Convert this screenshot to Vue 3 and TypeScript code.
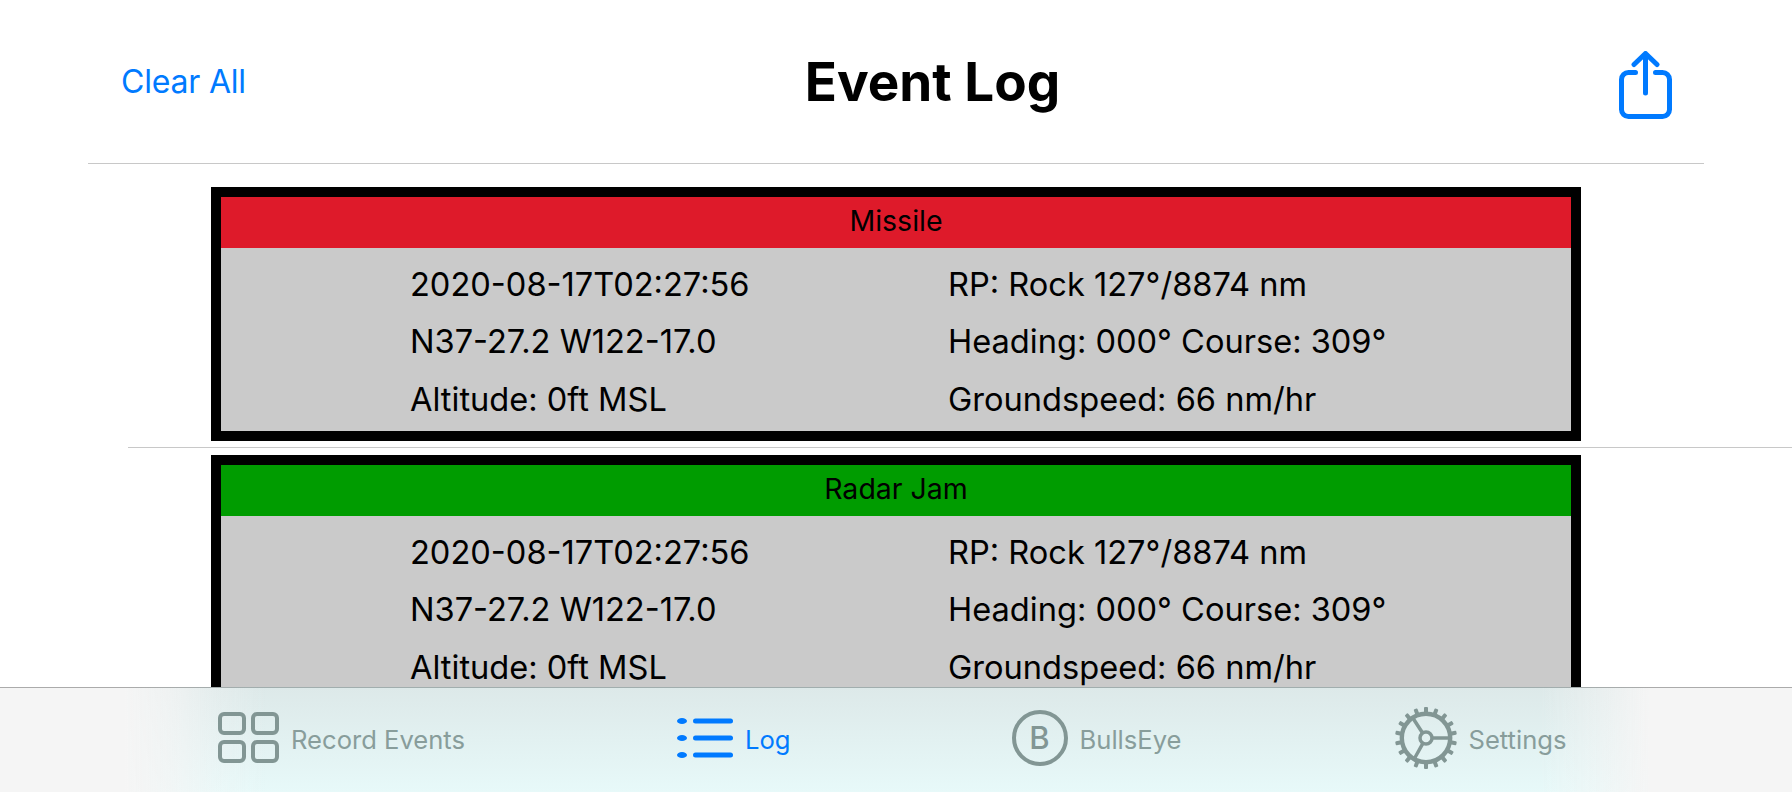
<template>
  <div class="page">
    <header class="nav">
      <span class="clear">Clear All</span>
      <h1 class="title">Event Log</h1>
      <svg class="share" width="53" height="68" viewBox="0 0 53 68" fill="none" stroke="#007aff" stroke-width="5" stroke-linecap="round" stroke-linejoin="round">
        <path d="M16.5 21.5H9.5a7 7 0 0 0-7 7v30a7 7 0 0 0 7 7h34a7 7 0 0 0 7-7v-30a7 7 0 0 0-7-7h-7" />
        <path d="M26.5 42V2.5M15 13.5 26.5 2.5 38 13.5" />
      </svg>
    </header>

    <main class="list">
      <div v-for="event in events" :key="event.name" class="row">
        <section class="card">
          <div class="card-head" :class="event.kind">{{ event.name }}</div>
          <div class="card-body">
            <span>2020-08-17T02:27:56</span>
            <span>RP: Rock 127°/8874 nm</span>
            <span>N37-27.2 W122-17.0</span>
            <span>Heading: 000° Course: 309°</span>
            <span>Altitude: 0ft MSL</span>
            <span>Groundspeed: 66 nm/hr</span>
          </div>
        </section>
      </div>
    </main>

    <nav class="tabs">
      <div class="tab">
        <svg width="61" height="51" viewBox="0 0 61 51" fill="none" stroke="#829694" stroke-width="4">
          <rect x="2" y="2" width="24" height="19" rx="4" />
          <rect x="35" y="2" width="24" height="19" rx="4" />
          <rect x="2" y="30" width="24" height="19" rx="4" />
          <rect x="35" y="30" width="24" height="19" rx="4" />
        </svg>
        <span>Record Events</span>
      </div>
      <div class="tab active">
        <svg width="56" height="40" viewBox="0 0 56 40" fill="#007aff">
          <ellipse cx="5" cy="3" rx="5" ry="3" />
          <ellipse cx="5" cy="20" rx="5" ry="3" />
          <ellipse cx="5" cy="37" rx="5" ry="3" />
          <rect x="16" y="0.5" width="40" height="5" rx="2.5" />
          <rect x="16" y="17.5" width="40" height="5" rx="2.5" />
          <rect x="16" y="34.5" width="40" height="5" rx="2.5" />
        </svg>
        <span>Log</span>
      </div>
      <div class="tab">
        <div class="bull">B</div>
        <span>BullsEye</span>
      </div>
      <div class="tab">
        <svg width="62" height="62" viewBox="-31 -31 62 62" fill="none" stroke="#829694">
          <rect v-for="a in teeth" :key="a" x="-2" y="-31" width="4" height="7" rx="1" fill="#829694" stroke="none" :transform="`rotate(${a})`" />
          <circle r="24.2" stroke-width="4.4" />
          <circle r="6" stroke-width="3.5" />
          <path d="M6 0H24M-3.4 -5-12.5 -19M-3 5.2-11 19.5" stroke-width="3.5" />
        </svg>
        <span>Settings</span>
      </div>
    </nav>
  </div>
</template>

<script setup lang="ts">
interface LogEvent {
  name: string
  kind: 'red' | 'green'
}

const events: LogEvent[] = [
  { name: 'Missile', kind: 'red' },
  { name: 'Radar Jam', kind: 'green' }
]

// gear teeth, one every 20 degrees
const teeth = Array.from({ length: 18 }, (_, i) => i * 20)
</script>

<style>
html,
body {
  margin: 0;
  background: #fff;
}
</style>

<style scoped>
.page {
  display: flex;
  flex-direction: column;
  width: 1792px;
  height: 792px;
  overflow: hidden;
  background: #fff;
  color: #000;
  font-family: Inter, "Liberation Sans", sans-serif;
}

.nav {
  display: flex;
  align-items: center;
  justify-content: space-between;
  height: 163px;
  margin: 0 88px;
  padding: 0 32px 0 33px;
  border-bottom: 1px solid #c8c8c8;
}

.clear {
  color: #007aff;
  font-size: 32px;
  letter-spacing: -0.2px;
}

.title {
  margin: 0;
  font-size: 53px;
  font-weight: 700;
}

.share {
  margin-top: 7px;
}

.list {
  flex: 1;
  min-height: 0;
  overflow: hidden;
  padding-top: 16px;
}

.row {
  margin-left: 128px;
  padding: 7px 0 6px;
  border-bottom: 1px solid #c8c8c8;
}

.card {
  width: 1350px;
  margin-left: 83px;
  border: 10px solid #000;
  background: #cacaca;
}

.card-head {
  height: 51px;
  line-height: 47px;
  text-align: center;
  font-size: 28.5px;
}

.red {
  background: #de1a2a;
}

.green {
  background: #009c00;
}

.card-body {
  display: grid;
  grid-template-columns: 538px 1fr;
  grid-auto-rows: 57.5px;
  align-items: center;
  padding: 7px 0 3.5px 189px;
  font-size: 32.6px;
}

.tabs {
  display: flex;
  align-items: center;
  flex-shrink: 0;
  height: 105px;
  padding-left: 218px;
  padding-bottom: 2px;
  box-sizing: border-box;
  border-top: 1px solid rgba(0, 0, 0, 0.3);
  background:
    linear-gradient(to right, #f5f5f5 125px, rgba(245, 245, 245, 0.75) 170px, rgba(245, 245, 245, 0.3) 215px, rgba(245, 245, 245, 0) 265px, rgba(245, 245, 245, 0) 1540px, rgba(245, 245, 245, 0.5) 1600px, #f5f5f5 1650px),
    linear-gradient(to bottom, #dde9e9, #e7f9f9);
  color: #889d9b;
  font-size: 25.6px;
}

.tab {
  display: flex;
  align-items: center;
  gap: 12px;
}

.tab:nth-child(2) {
  margin-left: 212px;
}

.tab:nth-child(3) {
  margin-left: 221px;
}

.tab:nth-child(4) {
  margin-left: 213px;
}

.tab svg,
.bull {
  display: block;
  flex-shrink: 0;
  margin-bottom: 3px;
}

.active {
  color: #007aff;
}

.bull {
  box-sizing: border-box;
  width: 56px;
  height: 56px;
  border: 4px solid #829694;
  border-radius: 50%;
  color: #829694;
  font-size: 31px;
  font-weight: 500;
  line-height: 48px;
  text-align: center;
}
</style>
